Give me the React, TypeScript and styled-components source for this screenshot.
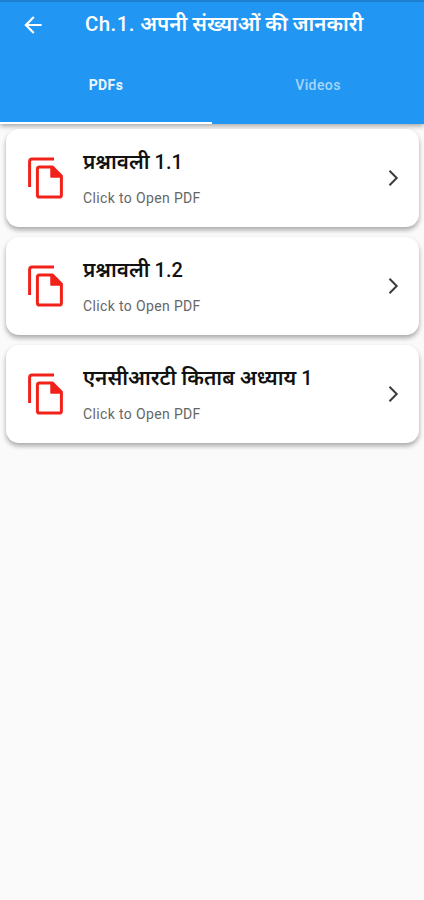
import React from 'react';
import styled, { createGlobalStyle } from 'styled-components';

const Global = createGlobalStyle`
  * { box-sizing: border-box; }
  body { margin: 0; background: #fafafa; font-family: Roboto, "Noto Sans", "Noto Sans Devanagari", sans-serif; }
`;
const Screen = styled.main`
  height: 900px;
  background: #fafafa;
  overflow: hidden;
`;
const Header = styled.header`
  height: 124px;
  background: #2196f3;
  border-top: 2px solid #1c7fd0;
  color: #fff;
  box-shadow: 0 2px 5px rgba(0, 0, 0, 0.35);
`;
const Bar = styled.div`
  height: 45px;
  display: flex;
  align-items: center;
  padding-left: 20px;
  gap: 39px;
`;
const BackIcon = styled.svg`
  width: 26px;
  height: 26px;
  fill: #fff;
`;
const Title = styled.h1`
  margin: 0 0 2px;
  font-size: 20.5px;
  line-height: 28px;
  font-weight: 500;
  letter-spacing: 0.4px;
  white-space: nowrap;
`;
const Hindi = styled.span`
  font-weight: 600;
  font-size: 20.5px;
  letter-spacing: 0;
`;
const Tabs = styled.nav`
  height: 77px;
  display: grid;
  grid-template-columns: 1fr 1fr;
`;
const Tab = styled.button<{ $active?: boolean }>`
  border: 0;
  border-bottom: 2px solid ${(p) => (p.$active ? '#fff' : 'transparent')};
  background: none;
  padding: 0;
  color: ${(p) => (p.$active ? '#edf8ff' : '#a6d5fa')};
  font: ${(p) => (p.$active ? 700 : 500)} 14px Roboto, sans-serif;
  letter-spacing: 0.4px;
`;
const List = styled.section`
  display: flex;
  flex-direction: column;
  gap: 10.2px;
  padding: 5px 5px 5px 6px;
`;
const Card = styled.article`
  height: 98px;
  display: flex;
  align-items: center;
  padding: 0 14px 0 19px;
  border-radius: 13px;
  background: #fff;
  box-shadow: 0 3px 5px rgba(0, 0, 0, 0.33);
`;
const FileIcon = styled.svg`
  width: 42px;
  height: 44px;
  fill: none;
  stroke: #f0221a;
  stroke-width: 3;
  stroke-linejoin: round;
`;
const Labels = styled.div`
  flex: 1;
  padding-left: 16px;
`;
const Name = styled.h2`
  margin: 0;
  font-size: 20px;
  line-height: 28px;
  font-weight: 500;
  color: #111;
  white-space: nowrap;
`;
const NameHindi = styled.span`
  font-size: 20.7px;
  font-weight: 600;
`;
const Hint = styled.p`
  margin: 12px 0 0;
  font-size: 14px;
  line-height: 20px;
  letter-spacing: 0.36px;
  color: #666;
`;
const Chevron = styled.svg`
  width: 24px;
  height: 24px;
  fill: none;
  stroke: #3c3c3c;
  stroke-width: 2;
`;

const items = [
  { name: 'प्रश्नावली', number: '1.1' },
  { name: 'प्रश्नावली', number: '1.2' },
  { name: 'एनसीआरटी किताब अध्याय', number: '1' },
];

export default function App() {
  return (
    <Screen>
      <Global />
      <Header>
        <Bar>
          <BackIcon viewBox="0 0 24 24"><path d="M20 11H7.83l5.59-5.59L12 4l-8 8 8 8 1.41-1.41L7.83 13H20z" /></BackIcon>
          <Title>Ch.1. <Hindi>अपनी संख्याओं की जानकारी</Hindi></Title>
        </Bar>
        <Tabs>
          <Tab $active>PDFs</Tab>
          <Tab>Videos</Tab>
        </Tabs>
      </Header>
      <List>
        {items.map(({ name, number }) => (
          <Card key={name + number}>
            <FileIcon viewBox="0 0 42 44">
              <path d="M4.6 31V5.6Q4.6 3.1 7.1 3.1H29" />
              <path d="M14.5 11.1H27.5L36.4 20V38.9Q36.4 41 34.3 41H14.5Q12.4 41 12.4 38.9V13.2Q12.4 11.1 14.5 11.1Z" />
              <path d="M26 11.1V21H36.4L27.5 11.1Z" fill="#f0221a" strokeWidth="1.5" />
            </FileIcon>
            <Labels>
              <Name><NameHindi>{name}</NameHindi> {number}</Name>
              <Hint>Click to Open PDF</Hint>
            </Labels>
            <Chevron viewBox="0 0 24 24"><path d="M8.5 4.8 15.7 12l-7.2 7.2" /></Chevron>
          </Card>
        ))}
      </List>
    </Screen>
  );
}
